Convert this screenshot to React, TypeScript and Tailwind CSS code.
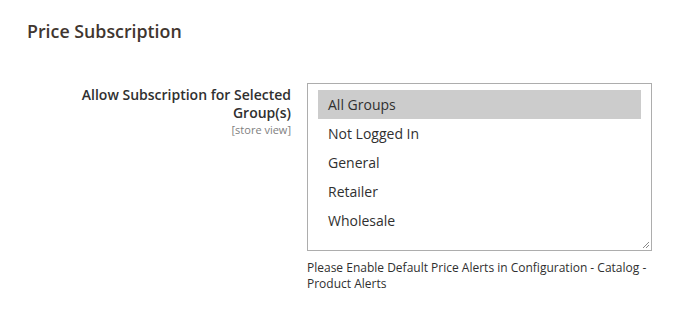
const groups = ['All Groups', 'Not Logged In', 'General', 'Retailer', 'Wholesale'];

export default function App() {
    return (
        <div className="w-[685px] h-[320px] bg-white font-['Open_Sans',sans-serif] text-[#303030]">
            <div className="pt-[19px] pl-[27px]">
                <h2 className="text-[17.8px] leading-[24px] font-semibold text-[#41362f]">Price Subscription</h2>
            </div>

            <div className="flex mt-[40px]">
                {/* Label */}
                <div className="w-[291px] pt-[3px] text-right">
                    <div className="text-[14px] leading-[18px] font-semibold text-[#303030] pl-[70px]">
                        Allow Subscription for Selected Group(s)
                    </div>
                    <div className="text-[11px] leading-[14px] text-[#808080] mt-[1px]">[store view]</div>
                </div>

                {/* Multiselect */}
                <div className="ml-[16px] w-[345px]">
                    <div className="relative h-[168px] border border-[#adadad] bg-white pt-[6px] px-[10px]">
                        {groups.map((g, i) => (
                            <div
                                key={g}
                                className={`h-[29px] pl-[10px] text-[14px] leading-[29px] ${i === 0 ? 'bg-[#cccccc]' : ''}`}
                            >
                                {g}
                            </div>
                        ))}
                        <svg className="absolute right-[1px] bottom-[1px]" width="9" height="9" viewBox="0 0 9 9">
                            <path d="M8 2 L2 8 M8 5 L5 8" stroke="#8a8a8a" strokeWidth="1" />
                        </svg>
                    </div>
                    <p className="mt-[9px] text-[12px] leading-[16px] text-[#303030]">
                        Please Enable Default Price Alerts in Configuration - Catalog - Product Alerts
                    </p>
                </div>
            </div>
        </div>
    );
}
